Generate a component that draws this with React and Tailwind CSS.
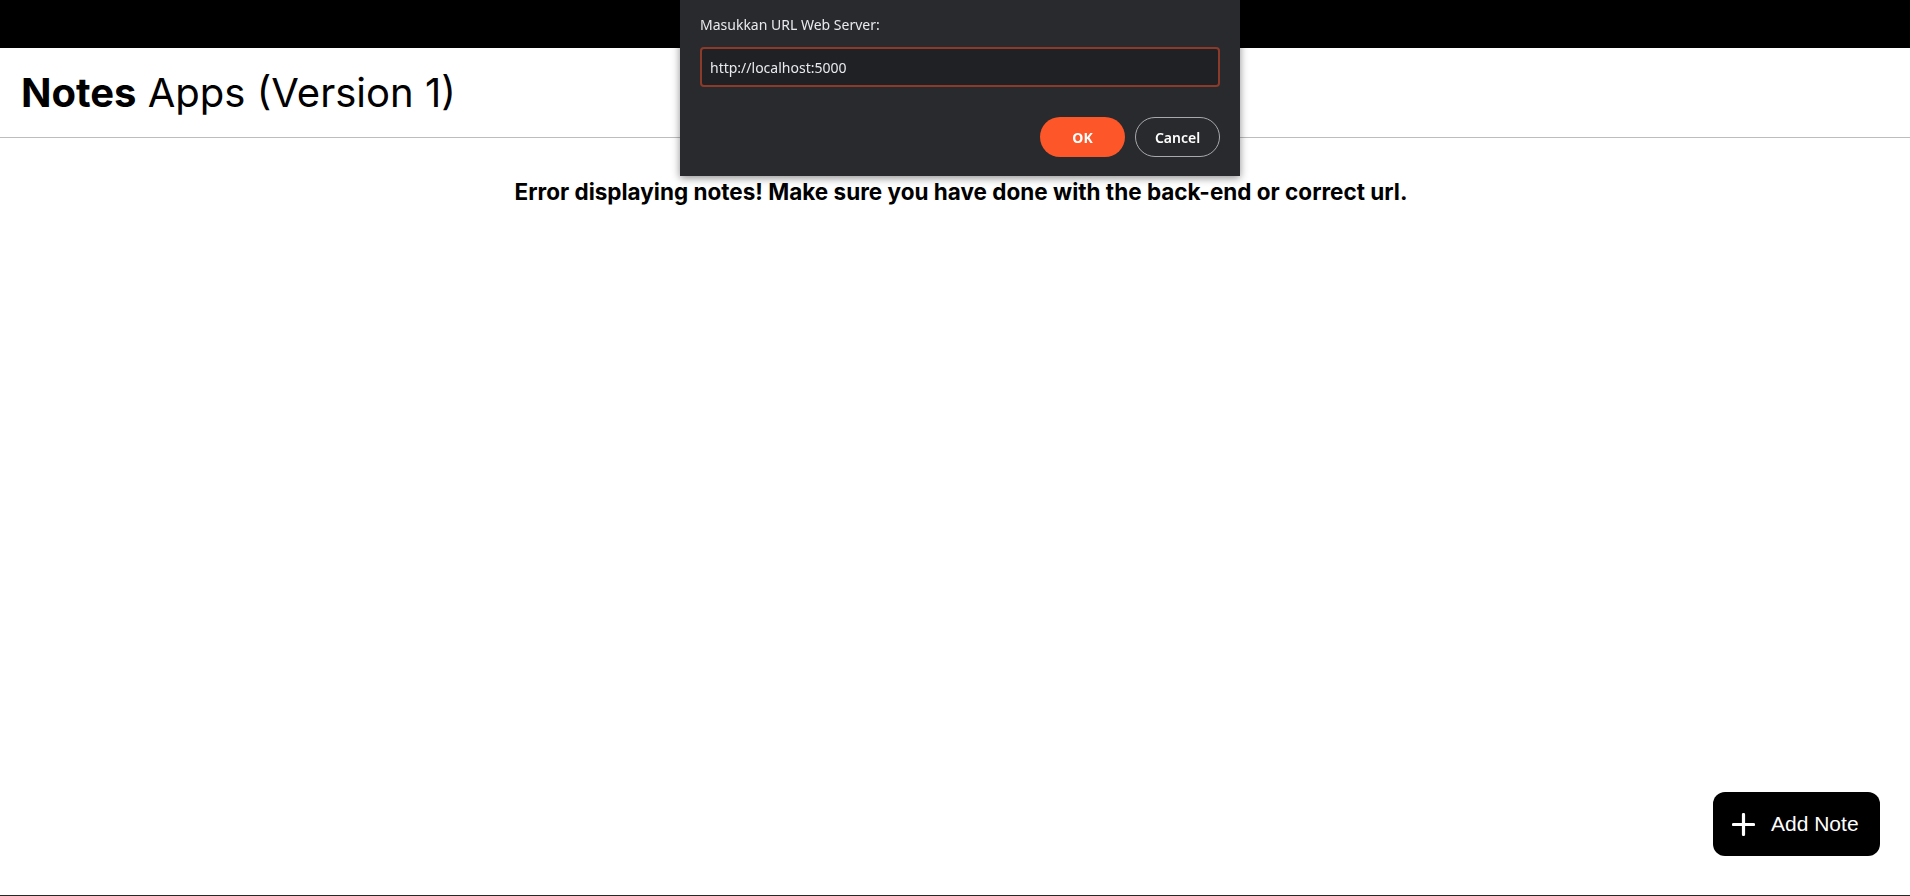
const PromptDialog = () => {
  return (
    <div className="fixed left-[680px] top-0 w-[560px] bg-[#292a2d] pt-[15px] pb-[19px] px-5 shadow-[0_2px_8px_rgba(0,0,0,0.45)] font-['Noto_Sans',sans-serif]">
      <p className="text-[14px] leading-5 text-[#e8eaed]">Masukkan URL Web Server:</p>
      <input
        type="text"
        defaultValue="http://localhost:5000"
        className="mt-[12px] w-full h-10 px-[8px] rounded-[4px] border-2 border-[#8c3b2b] bg-[#202124] text-[14px] text-[#e8eaed] outline-none"
      />
      <div className="mt-[30px] flex justify-end gap-[10px]">
        <button className="w-[85px] h-10 rounded-full bg-[#fd5628] text-[14px] font-bold text-white">
          OK
        </button>
        <button className="w-[85px] h-10 rounded-full border border-[#a8a9ab] text-[14px] font-semibold text-white">
          Cancel
        </button>
      </div>
    </div>
  );
};

const PlusIcon = () => (
  <svg width="23" height="23" viewBox="0 0 23 23" fill="none" stroke="currentColor" strokeWidth="3.2" strokeLinecap="round">
    <path d="M11.5 1.5v20M1.5 11.5h20" />
  </svg>
);

const App = () => {
  return (
    <div className="h-screen flex flex-col bg-white font-['Inter',sans-serif] text-black">
      {/* top bar */}
      <div className="h-12 bg-black shrink-0" />

      {/* header */}
      <header className="h-[90px] shrink-0 flex items-center px-[21px] border-b border-[#bdbdbd]">
        <h1 className="text-[40px] leading-none">
          <span className="font-bold">Notes</span> Apps (Version 1)
        </h1>
      </header>

      {/* content */}
      <main className="flex-1 pt-[40px] pl-3 text-center">
        <h2 className="text-[22.5px] leading-7 font-bold">
          Error displaying notes! Make sure you have done with the back-end or correct url.
        </h2>
      </main>

      <div className="h-px bg-[#2b2623] shrink-0" />

      <button className="fixed right-[30px] bottom-10 w-[167px] h-16 rounded-[12px] bg-black text-white flex items-center pl-[19px] gap-[16px] font-['Liberation_Sans',Arial,sans-serif]">
        <PlusIcon />
        <span className="text-[21px]">Add Note</span>
      </button>

      <PromptDialog />
    </div>
  );
};

export default App;
